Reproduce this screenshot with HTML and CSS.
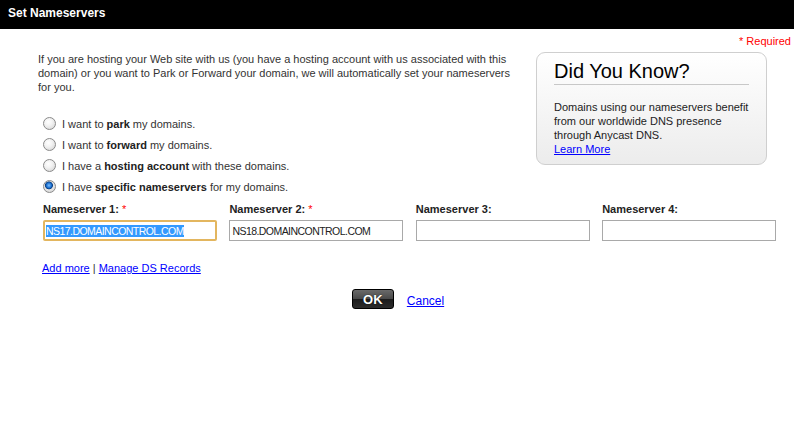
FILE: index.html
```html
<!DOCTYPE html>
<html lang="en">
<head>
    <meta charset="UTF-8">
    <title>Set Nameservers</title>
    <link rel="stylesheet" href="styles.css">
</head>
<body>
    <div class="header">Set Nameservers</div>
    <div class="required"><span class="star">*</span> Required</div>

    <div class="top">
        <div class="intro">
            <p>If you are hosting your Web site with us (you have a hosting account with us associated with this domain) or you want to Park or Forward your domain, we will automatically set your nameservers for you.</p>
            <ul class="options">
                <li><label><input type="radio" name="ns"> I want to <b>park</b> my domains.</label></li>
                <li><label><input type="radio" name="ns"> I want to <b>forward</b> my domains.</label></li>
                <li><label><input type="radio" name="ns"> I have a <b>hosting account</b> with these domains.</label></li>
                <li><label><input type="radio" name="ns" checked> I have <b>specific nameservers</b> for my domains.</label></li>
            </ul>
        </div>
        <div class="know-box">
            <h2>Did You Know?</h2>
            <p>Domains using our nameservers benefit from our worldwide DNS presence through Anycast DNS.<br><a href="#">Learn More</a></p>
        </div>
    </div>

    <div class="fields">
        <div class="field">
            <label>Nameserver 1: <span class="star">*</span></label>
            <input type="text" id="ns1" value="NS17.DOMAINCONTROL.COM">
        </div>
        <div class="field">
            <label>Nameserver 2: <span class="star">*</span></label>
            <input type="text" value="NS18.DOMAINCONTROL.COM">
        </div>
        <div class="field">
            <label>Nameserver 3:</label>
            <input type="text">
        </div>
        <div class="field">
            <label>Nameserver 4:</label>
            <input type="text">
        </div>
    </div>

    <div class="more-links"><a href="#">Add more</a> | <a href="#">Manage DS Records</a></div>

    <div class="actions">
        <button class="ok-btn">OK</button>
        <a href="#" class="cancel">Cancel</a>
    </div>

    <script>
        var first = document.getElementById('ns1');
        first.focus();
        first.select();
    </script>
</body>
</html>
```

FILE: styles.css
```css
* {
    margin: 0;
    padding: 0;
    box-sizing: border-box;
}
body {
    font-family: Arial, 'Liberation Sans', sans-serif;
    font-size: 11px;
    color: #333;
    background: #fff;
}
a {
    color: #00f;
}
.header {
    background: #000;
    color: #fff;
    font-size: 12px;
    font-weight: bold;
    height: 29px;
    line-height: 27px;
    padding-left: 8px;
}
.required {
    text-align: right;
    color: #f00;
    line-height: 14px;
    margin: 5px 3px 0 0;
}
.star {
    color: #f00;
    font-weight: normal;
}
.top {
    display: flex;
    align-items: flex-start;
    padding-left: 38px;
}
.intro {
    width: 478px;
    margin-top: 4px;
    line-height: 14px;
}
.options {
    list-style: none;
    margin-top: 19px;
}
.options li {
    height: 21px;
    display: flex;
    align-items: center;
}
.options label {
    display: flex;
    align-items: center;
}
.options b {
    color: #222;
    margin: 0 3px;
}
.options input {
    appearance: none;
    -webkit-appearance: none;
    width: 13px;
    height: 13px;
    margin: 0 6px 0 5px;
    border: 1px solid #8a8a8a;
    border-radius: 50%;
    background: radial-gradient(circle at 40% 35%, #fff 0, #f2f2f2 40%, #cfcfcf 100%);
}
.options input:checked {
    background: radial-gradient(circle at 45% 40%, #7ec0ff 0, #1a6fd0 28%, #0b3f80 40%, #e6e6e6 48%, #cfcfcf 100%);
}
.know-box {
    width: 231px;
    height: 113px;
    margin: 4px 27px 0 auto;
    padding: 0 17px;
    border: 1px solid #cfcfcf;
    border-radius: 9px;
    background: linear-gradient(#fff, #ececec);
}
.know-box h2 {
    font-size: 20px;
    font-weight: normal;
    color: #000;
    line-height: 23px;
    margin-top: 7px;
    padding-bottom: 1px;
    border-bottom: 1px solid #c8c8c8;
}
.know-box p {
    color: #222;
    line-height: 14px;
    margin-top: 15px;
}
.fields {
    display: grid;
    grid-template-columns: repeat(4, 174px);
    column-gap: 12.4px;
    padding-left: 43px;
    margin-top: 5px;
}
.field label {
    display: block;
    font-weight: bold;
    color: #222;
    line-height: 14px;
}
.field input {
    display: block;
    width: 174px;
    height: 21px;
    margin-top: 4px;
    padding: 0 2px;
    border: 1px solid #a9a9a9;
    font-family: Arial, 'Liberation Sans', sans-serif;
    font-size: 10.5px;
    letter-spacing: -0.55px;
    color: #222;
    outline: none;
}
.field input:focus {
    border: 2px solid #e3b65f;
    border-radius: 2px;
    padding: 0 1px;
}
.field input::selection {
    background: #3399ff;
    color: #fff;
}
.more-links {
    padding-left: 42px;
    margin-top: 20px;
    line-height: 14px;
    color: #333;
}
.actions {
    display: flex;
    justify-content: center;
    align-items: center;
    gap: 13px;
    margin-top: 14px;
}
.ok-btn {
    width: 42px;
    height: 20px;
    border: 1px solid #000;
    border-radius: 3px;
    background: linear-gradient(#6a6a6a 0, #4a4a4a 48%, #1c1c1c 52%, #2c2c2c 100%);
    color: #fff;
    font-family: Arial, 'Liberation Sans', sans-serif;
    font-size: 13px;
    font-weight: bold;
    text-shadow: 0 0 1px #000;
    margin-left: 2px;
}
.cancel {
    font-size: 12px;
    margin-top: 3px;
}
```
